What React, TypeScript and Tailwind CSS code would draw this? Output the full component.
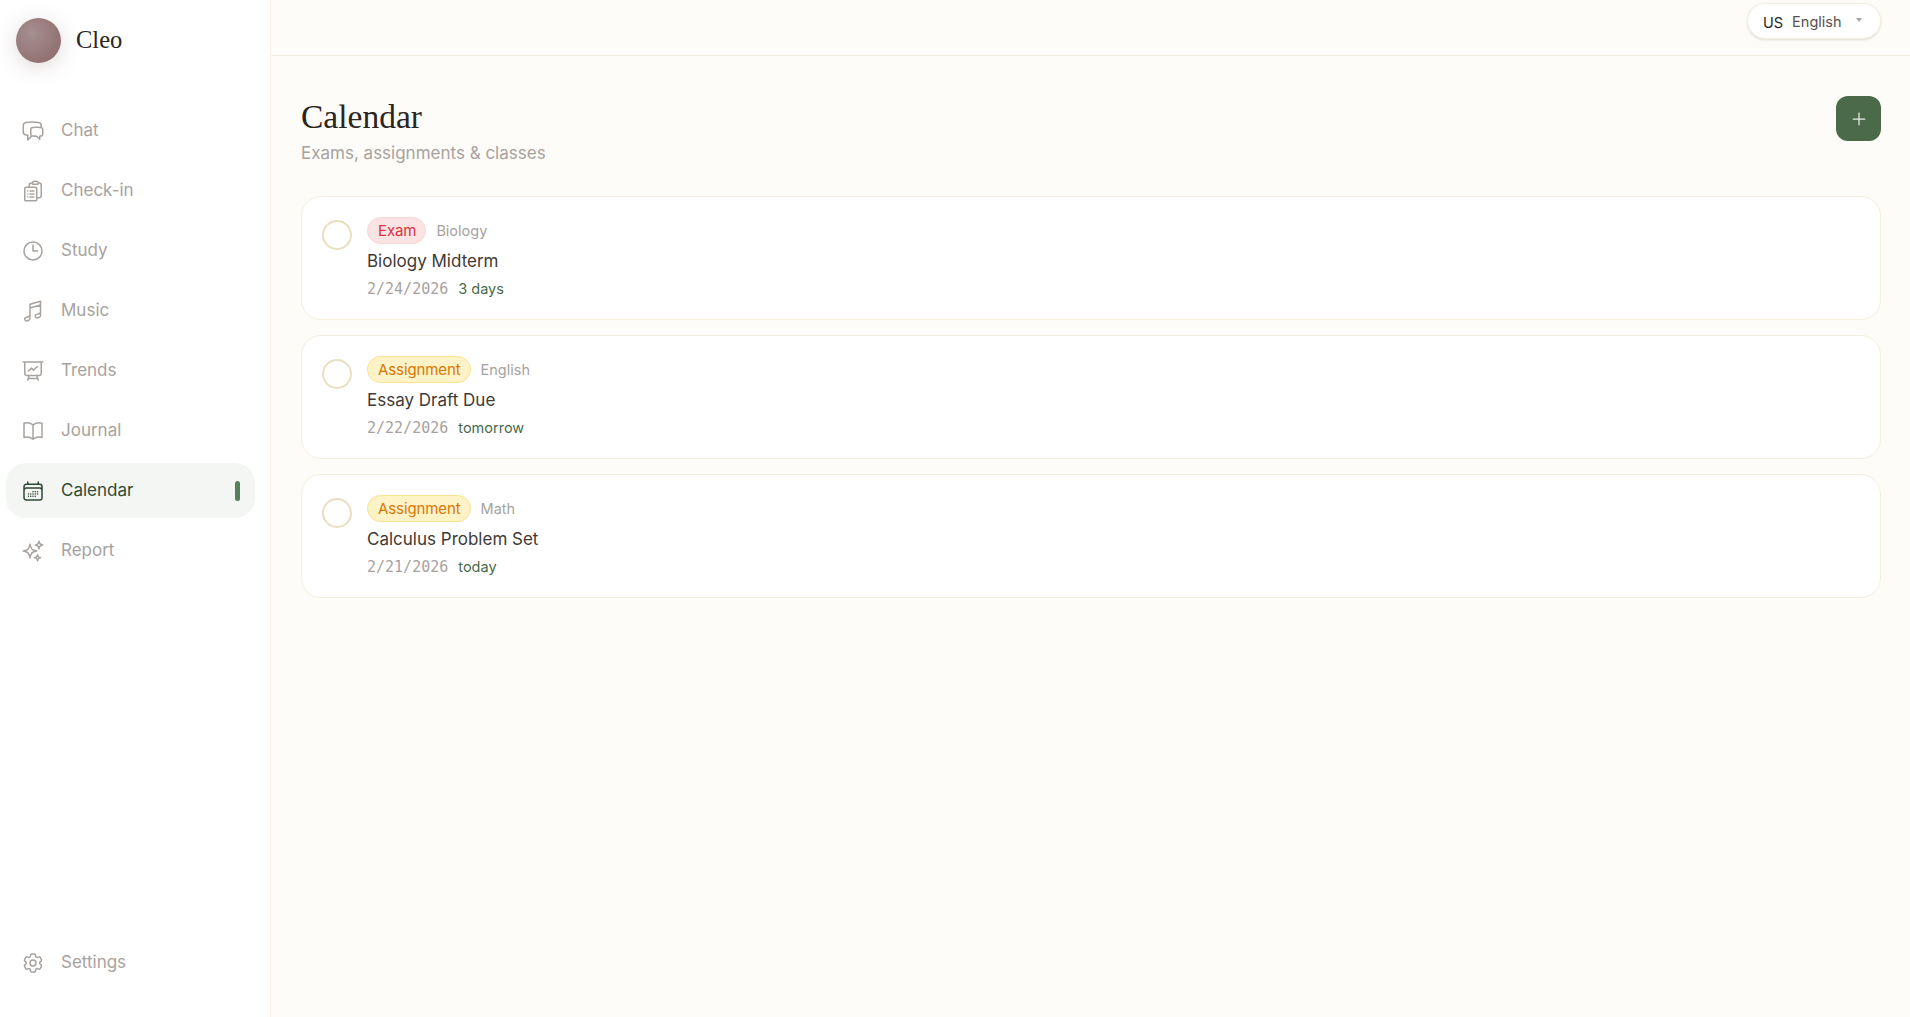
import React from 'react';
import {
  HiOutlineChatBubbleLeftRight,
  HiOutlineClipboardDocumentList,
  HiOutlineClock,
  HiOutlineMusicalNote,
  HiOutlinePresentationChartLine,
  HiOutlineBookOpen,
  HiOutlineCalendarDays,
  HiOutlineSparkles,
  HiOutlineCog6Tooth,
} from 'react-icons/hi2';
import { Plus } from 'lucide-react';

const SANS = 'font-["Inter","Liberation_Sans",sans-serif]';

const navItems = [
  { label: 'Chat', icon: HiOutlineChatBubbleLeftRight },
  { label: 'Check-in', icon: HiOutlineClipboardDocumentList },
  { label: 'Study', icon: HiOutlineClock },
  { label: 'Music', icon: HiOutlineMusicalNote },
  { label: 'Trends', icon: HiOutlinePresentationChartLine },
  { label: 'Journal', icon: HiOutlineBookOpen },
  { label: 'Calendar', icon: HiOutlineCalendarDays, active: true },
  { label: 'Report', icon: HiOutlineSparkles },
];

const events = [
  { kind: 'Exam', subject: 'Biology', title: 'Biology Midterm', date: '2/24/2026', due: '3 days' },
  { kind: 'Assignment', subject: 'English', title: 'Essay Draft Due', date: '2/22/2026', due: 'tomorrow' },
  { kind: 'Assignment', subject: 'Math', title: 'Calculus Problem Set', date: '2/21/2026', due: 'today' },
];

const NavItem = ({ label, icon: Icon, active }: { label: string; icon: React.ElementType; active?: boolean }) => (
  <div
    className={`flex h-[55px] items-center rounded-[20px] pl-[15px] pr-[15px] ${
      active ? 'bg-[#f3f6f3] text-[#2f4a35]' : 'text-[#a8a29e]'
    }`}
  >
    <Icon className="h-6 w-6 shrink-0" />
    <span className="ml-[16px] text-[17px]">{label}</span>
    {active && <span className="ml-auto h-5 w-[5px] rounded-full bg-[#55805a]" />}
  </div>
);

const EventCard = ({ kind, subject, title, date, due }: (typeof events)[number]) => (
  <div className="flex h-[124px] rounded-[20px] border border-[#f5efe0] bg-white pl-[20px] pt-[20px]">
    <div className="mt-[3px] h-[30px] w-[30px] shrink-0 rounded-full border-2 border-[#e8dfc0]" />
    <div className="ml-[15px] flex flex-col">
      <div className="flex items-center">
        <span
          className={`flex h-[27px] items-center rounded-full border pl-[10px] pr-[9px] pt-[1px] text-[15px] tracking-[-0.1px] ${
            kind === 'Exam'
              ? 'border-[#fbd5d5] bg-[#fae3e3] text-[#d9343f]'
              : 'border-[#fae28f] bg-[#fdf3c7] text-[#d97706]'
          }`}
        >
          {kind}
        </span>
        <span className="ml-[10px] text-[14.5px] text-[#a8a29e]">{subject}</span>
      </div>
      <div className="mt-[5px] text-[17px] leading-[25px] text-[#3f3a36]">{title}</div>
      <div className="mt-[4px] flex items-center">
        <span className='font-["DejaVu_Sans_Mono",monospace] text-[15px] text-[#a8a29e]'>{date}</span>
        <span className="ml-[10px] text-[14.5px] text-[#4a6a4a]">{due}</span>
      </div>
    </div>
  </div>
);

export default function App() {
  return (
    <div className={`flex h-[1017px] w-full overflow-hidden bg-[#fefcf8] ${SANS}`}>
      <aside className="flex w-[271px] shrink-0 flex-col border-r border-[#f7f2e3] bg-white">
        <div className="flex h-[80px] items-center pl-[16px]">
          <div className="h-[45px] w-[45px] rounded-full bg-[radial-gradient(circle_at_35%_35%,#a68f8f,#8a6668)] shadow-[0_4px_20px_rgba(138,102,104,0.25)]" />
          <span className='ml-[15px] mt-[1px] font-["Liberation_Serif",serif] text-[24.5px] text-[#292524]'>Cleo</span>
        </div>
        <nav className="mt-[23px] flex flex-col gap-[5px] pl-[6px] pr-[15px]">
          {navItems.map((item) => (
            <NavItem key={item.label} {...item} />
          ))}
        </nav>
        <div className="mt-auto pb-[27px] pl-[6px] pr-[15px]">
          <NavItem label="Settings" icon={HiOutlineCog6Tooth} />
        </div>
      </aside>

      <div className="flex min-w-0 flex-1 flex-col">
        <header className="flex h-[56px] shrink-0 items-start justify-end border-b border-[#f5efe0] pr-[29px] pt-[3px]">
          <div className="flex h-[36px] w-[134px] items-center rounded-full border border-[#f5efe0] bg-white pl-[15px] shadow-sm">
            <span className="mt-[3px] text-[14.5px] text-[#292524]">US</span>
            <span className="ml-[9px] mt-[1px] text-[14.5px] text-[#57534e]">English</span>
            <span className="mb-[2px] ml-[14px] h-0 w-0 border-x-[3px] border-t-[4px] border-x-transparent border-t-[#a8a29e]" />
          </div>
        </header>

        <main className="pl-[30px] pr-[29px] pt-[40px]">
          <div className="flex items-start justify-between">
            <div>
              <h1 className='pt-[9px] font-["Liberation_Serif",serif] text-[33.5px] leading-[24px] text-[#292524]'>Calendar</h1>
              <p className="mt-[12px] text-[17px] leading-[25px] text-[#a8a29e]">Exams, assignments &amp; classes</p>
            </div>
            <button className="flex h-[45px] w-[45px] items-center justify-center rounded-[12px] bg-[#4a6a4a] text-[#e7ebe4]">
              <Plus className="h-5 w-5" strokeWidth={1.5} />
            </button>
          </div>
          <div className="mt-[30px] flex flex-col gap-[15px]">
            {events.map((event) => (
              <EventCard key={event.title} {...event} />
            ))}
          </div>
        </main>
      </div>
    </div>
  );
}
